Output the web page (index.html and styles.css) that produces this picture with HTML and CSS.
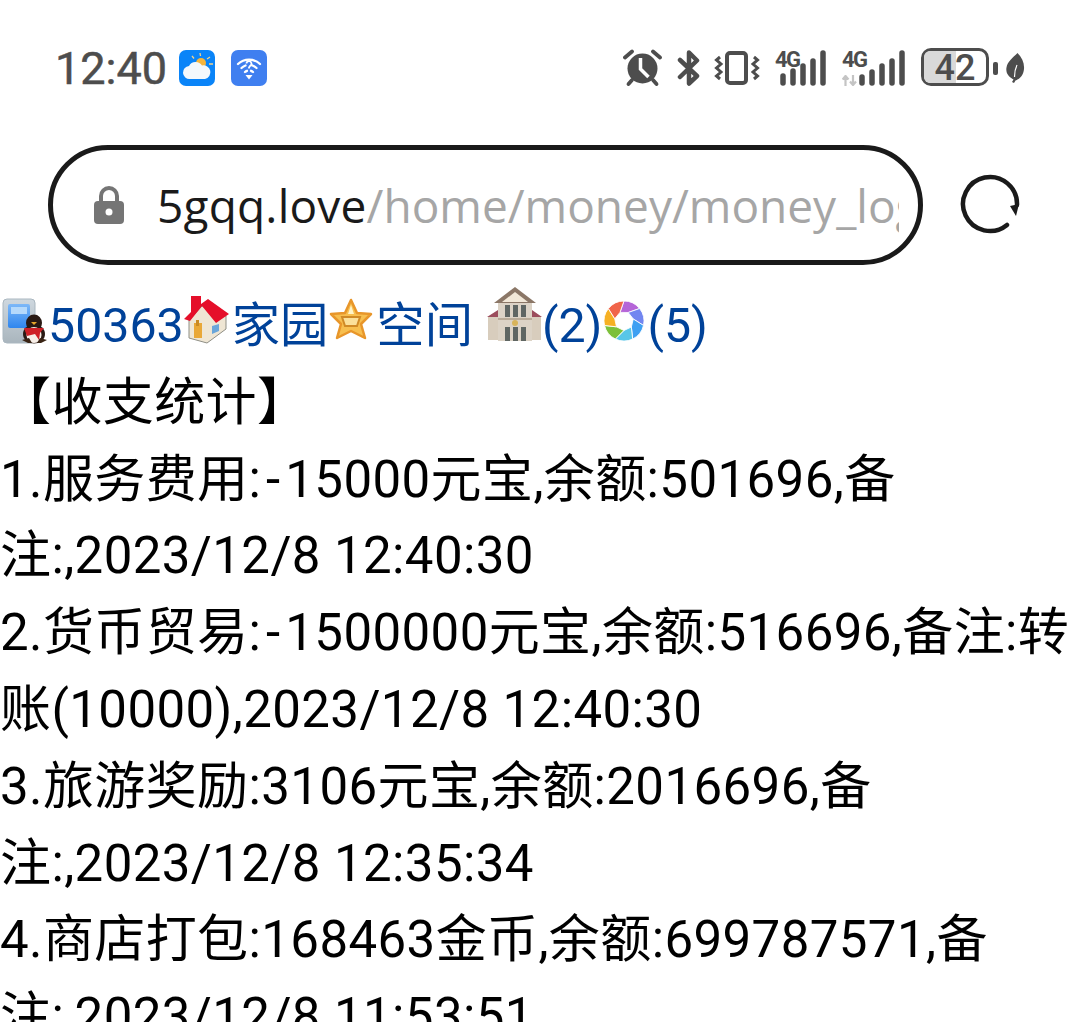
FILE: index.html
```html
<!DOCTYPE html>
<html lang="zh-CN">
<head>
  <meta charset="UTF-8" />
  <title>收支统计</title>
  <link rel="stylesheet" href="styles.css">
</head>
<body>
  <div class="status-bar">
    <div class="status-left">
      <span class="clock">12:40</span>
      <svg class="app-icon" width="36" height="36" viewBox="0 0 36 36">
        <rect width="36" height="36" rx="7" fill="#0a84f8"/>
        <circle cx="22" cy="13" r="5" fill="#f6b53c"/>
        <path d="M21 3l.5 3M13 6l2 2.500M31 7l-3 2M34 14h-4" stroke="#f3d28a" stroke-width="1.300" fill="none"/>
        <path d="M11 29a6.500 6.500 0 0 1-1-13 7.500 7.500 0 0 1 13-.5 6.800 6.800 0 0 1 3 13.500z" fill="#f4f8fc"/>
      </svg>
      <svg class="app-icon wifi-app" width="36" height="36" viewBox="0 0 36 36">
        <rect width="36" height="36" rx="7" fill="#3f7ff0"/>
        <path d="M7 14a16 16 0 0 1 22 0M10.500 18a11.500 11.500 0 0 1 4-2.500M25.500 18a11.500 11.500 0 0 0-4-2.500M14 22a6 6 0 0 1 2-1.200M22 22a6 6 0 0 0-2-1.200" stroke="#fff" stroke-width="2.300" fill="none" stroke-linecap="round"/>
        <path d="M15.500 13.500a2.500 2.500 0 1 1 3.500 2.500l-1 1.500v1" stroke="#fff" stroke-width="1.800" fill="none"/>
        <path d="M14.500 25h7l-3.500 4.500z" fill="#fff"/>
      </svg>
    </div>
    <div class="status-right">
      <svg class="s-alarm" width="40" height="38" viewBox="0 0 40 38">
        <circle cx="19.500" cy="19.500" r="15" fill="#4d4d4d"/>
        <path d="M17.500 9v11l8 8" stroke="#fff" stroke-width="3.500" fill="none"/>
        <path d="M2 8.500L9 2.500M37 8.500L30 2.500" stroke="#4d4d4d" stroke-width="3.800" stroke-linecap="round"/>
        <path d="M9 31l-3.500 4M30 31l3.500 4" stroke="#4d4d4d" stroke-width="3.800" stroke-linecap="round"/>
      </svg>
      <svg class="s-bt" width="24" height="36" viewBox="0 0 24 36">
        <path d="M3 10l17 16-8 7.500V2.500l8 8L3 27" stroke="#4d4d4d" stroke-width="4.500" fill="none" stroke-linejoin="round" stroke-linecap="round"/>
      </svg>
      <svg class="s-vib" width="46" height="36" viewBox="0 0 46 36">
        <rect x="13" y="3" width="19" height="30" rx="3" stroke="#4d4d4d" stroke-width="4" fill="none"/>
        <path d="M6 7L2.500 10 7 14 2.500 18 7 22 2.500 26 6 29M40 7l3.500 3L39 14l4.500 4L39 22l4.500 4L40 29" stroke="#4d4d4d" stroke-width="3" fill="none"/>
      </svg>
      <span class="sim">
        <span class="net">4G</span>
        <svg width="52" height="36" viewBox="0 0 52 36">
          <path d="M8 26v7M18 21v12M28 16v17M38 11v22M48 3v30" stroke="#4d4d4d" stroke-width="5.500" stroke-linecap="round"/>
        </svg>
      </span>
      <span class="sim sim-two">
        <span class="net">4G</span>
        <svg class="arrows" width="15" height="11" viewBox="0 0 15 11"><path d="M3.500 11V3M.5 4.500L3.500 1l3 3.500M11 0v8M8 6.500l3 3.500 3-3.500" stroke="#c4c4c4" stroke-width="2.200" fill="none"/></svg>
        <svg width="64" height="36" viewBox="0 0 64 36">
          <path d="M20 27v6M30 22v11M40 16v17M50 11v22M60 3v30" stroke="#4d4d4d" stroke-width="5.500" stroke-linecap="round"/>
        </svg>
      </span>
      <span class="battery"><span class="battery-level"></span><span class="battery-num">42</span></span>
      <span class="battery-tip"></span>
      <svg class="s-leaf" width="20" height="32" viewBox="0 0 20 32">
        <path d="M12.500 1c4.500 4.500 7 10 6.500 16-.5 6-4 10-8.500 11.500L9 31 7 30l1.500-2.500C3.500 25 .5 21 1.500 15.500 2.500 9.500 8 5.500 12.500 1z" fill="#4d4d4d"/>
        <path d="M9.500 25c0-5 1-9 2.500-12" stroke="#fff" stroke-width="1.200" fill="none"/>
      </svg>
    </div>
  </div>

  <div class="url-row">
    <div class="url-bar">
      <svg class="lock" width="32" height="40" viewBox="0 0 32 40">
        <path d="M8 18v-7a8 8 0 0 1 16 0v7" stroke="#757575" stroke-width="4" fill="none"/>
        <rect x="1" y="16" width="30" height="23" rx="4" fill="#757575"/>
        <circle cx="16" cy="27" r="3.500" fill="#fff"/>
      </svg>
      <div class="url-text"><span class="host">5gqq.love</span>/home/money/money_log</div>
    </div>
    <svg class="reload" width="62" height="62" viewBox="0 0 62 62">
      <path d="M48 51A27 27 0 1 1 58 31" stroke="#1a1a1a" stroke-width="4.500" fill="none" stroke-linecap="round"/>
      <path d="M51 32l9-2-3 12z" fill="#1a1a1a"/>
    </svg>
  </div>

  <main class="content">
    <div class="nav-line">
      <svg class="fav" width="48" height="48" viewBox="0 0 48 48">
        <defs>
          <linearGradient id="screen" x1="0" y1="0" x2="0" y2="1"><stop offset="0" stop-color="#7db8f8"/><stop offset="1" stop-color="#2f86ee"/></linearGradient>
          <linearGradient id="pc" x1="0" y1="0" x2="0" y2="1"><stop offset="0" stop-color="#cfd8df"/><stop offset="1" stop-color="#a9b5bd"/></linearGradient>
        </defs>
        <rect x="3" y="3" width="32" height="44" rx="4" fill="url(#pc)" stroke="#aab7c0"/>
        <rect x="8" y="8" width="22" height="24" rx="2" fill="url(#screen)"/>
        <rect x="11" y="11" width="16" height="7" fill="#b5d9fb"/>
        <ellipse cx="34" cy="27" rx="8" ry="8.500" fill="#2a1a14"/>
        <ellipse cx="34" cy="38" rx="11" ry="9.500" fill="#2a1a14"/>
        <ellipse cx="34" cy="39" rx="7.500" ry="8" fill="#f8efe8"/>
        <path d="M24 32h20l-4 5-1 7-4-6-8 2z" fill="#cf2026"/>
        <path d="M31 26h6l-3 3z" fill="#e5a52a"/>
        <path d="M22 44l6 3h4l-3-5zM47 44l-6 3h-4l3-5z" fill="#3a2415"/>
      </svg><a href="#">50363</a><svg class="fav" width="48" height="48" viewBox="0 0 48 48">
        <path d="M5 24L18 10l24 10v13L23 47 5 42z" fill="#efe6d4" stroke="#8f8f86"/>
        <path d="M0 23L7 16V0h10v8l7-5 21 15-13 9L18 10 6 25z" fill="#e50f2a"/>
        <rect x="10" y="27" width="8" height="15" fill="#e9a838"/>
        <rect x="12" y="24" width="3" height="6" fill="#c98a24"/>
        <path d="M28 30l7-2v7l-7 3z" fill="#6aa6da"/>
      </svg><a href="#">家园</a><svg class="fav" width="48" height="48" viewBox="0 0 48 48">
        <path d="M23 4l6 13 14 1-10 10 4 14-14-7-14 7 4-14L3 18l14-1z" fill="#f7bf4f" stroke="#e8962a" stroke-width="2.500" stroke-linejoin="round"/>
        <path d="M23 9l3 9h-6z" fill="#fff4c8"/>
        <path d="M14 21h18l-3 9H17z" fill="#fbe09a" stroke="#d08a26" stroke-width="2"/>
      </svg><a href="#">空间</a> <svg class="fav fav-big" width="55" height="55" viewBox="0 0 55 55">
        <path d="M28 0L7 16h42z" fill="#8b7767"/>
        <path d="M28 5L15 15h26z" fill="#f2e8d8"/>
        <rect x="11" y="16" width="34" height="38" fill="#dcd3c6"/>
        <path d="M0 30l11-7v7zM55 30l-10-7v7z" fill="#9c4d5c"/>
        <rect x="1" y="30" width="10" height="23" fill="#d8cdbd"/>
        <rect x="45" y="30" width="9" height="23" fill="#d8cdbd"/>
        <path d="M18 18h5v12h-5zM26 18h5v12h-5zM34 18h5v12h-5zM18 40h5v14h-5zM26 40h5v14h-5zM34 40h5v14h-5z" fill="#5f6663"/>
        <rect x="11" y="31" width="34" height="2" fill="#b9ab98"/>
        <circle cx="28" cy="36" r="3" fill="#d8b45a"/>
      </svg><a href="#">(2)</a><svg class="fav aperture" width="40" height="40" viewBox="0 0 40 40">
        <g stroke="#fff" stroke-width="0.800">
          <path d="M20 0A20 20 0 0 1 35.600 7.500L24.200 11.500 16 11.400z" fill="#b565d8"/>
          <path transform="rotate(51.430 20 20)" d="M20 0A20 20 0 0 1 35.600 7.500L24.200 11.500 16 11.400z" fill="#7286f0"/>
          <path transform="rotate(102.860 20 20)" d="M20 0A20 20 0 0 1 35.600 7.500L24.200 11.500 16 11.400z" fill="#3ea0f2"/>
          <path transform="rotate(154.290 20 20)" d="M20 0A20 20 0 0 1 35.600 7.500L24.200 11.500 16 11.400z" fill="#58c6e8"/>
          <path transform="rotate(205.710 20 20)" d="M20 0A20 20 0 0 1 35.600 7.500L24.200 11.500 16 11.400z" fill="#7cc03a"/>
          <path transform="rotate(257.140 20 20)" d="M20 0A20 20 0 0 1 35.600 7.500L24.200 11.500 16 11.400z" fill="#f6b023"/>
          <path transform="rotate(308.570 20 20)" d="M20 0A20 20 0 0 1 35.600 7.500L24.200 11.500 16 11.400z" fill="#f0644a"/>
        </g>
      </svg><a href="#">(5)</a>
    </div>
    <div>【收支统计】</div>
    <div>1.服务费用:<span class="minus">-</span>15000元宝,余额:501696,备注:,2023/12/8 12:40:30</div>
    <div>2.货币贸易:<span class="minus">-</span>1500000元宝,余额:516696,备注:转账(10000),2023/12/8 12:40:30</div>
    <div>3.旅游奖励:3106元宝,余额:2016696,备注:,2023/12/8 12:35:34</div>
    <div>4.商店打包:168463金币,余额:699787571,备注:,2023/12/8 11:53:51</div>
  </main>
</body>
</html>
```

FILE: styles.css
```css
html, body {
  margin: 0;
  padding: 0;
  height: 1022px;
  overflow: hidden;
  background-color: #fff;
}
body {
  font-family: Roboto, "Noto Sans CJK SC", sans-serif;
  color: #000;
}
.status-bar {
  display: flex;
  justify-content: space-between;
  align-items: center;
  height: 36px;
  padding: 50px 55px 0 55px;
  color: #4d4d4d;
}
.status-left,
.status-right {
  display: flex;
  align-items: center;
}
.clock {
  font-size: 45px;
  -webkit-text-stroke: 0.5px #4d4d4d;
  margin-right: 12px;
}
.wifi-app {
  margin-left: 16px;
}
.s-alarm {
  margin-right: 14px;
}
.s-bt {
  margin-right: 13px;
}
.s-vib {
  margin-right: 15px;
}
.sim {
  position: relative;
  display: block;
  width: 52px;
  height: 36px;
  margin-right: 15px;
}
.sim-two {
  width: 64px;
}
.sim svg {
  display: block;
}
.net {
  position: absolute;
  left: 0;
  top: -2px;
  font-size: 22px;
  font-weight: 700;
  line-height: 24px;
  letter-spacing: -1.5px;
}
.sim .arrows {
  position: absolute;
  left: 0;
  top: 25px;
}
.battery {
  position: relative;
  display: block;
  box-sizing: border-box;
  width: 68px;
  height: 38px;
  margin-bottom: 3px;
  border: 3.5px solid #4d4d4d;
  border-radius: 10px;
}
.battery-level {
  display: block;
  width: 52%;
  height: 100%;
  background-color: #d9d9d9;
  border-radius: 6px 0 0 6px;
}
.battery-num {
  position: absolute;
  left: 0;
  right: 0;
  top: -2px;
  text-align: center;
  font-size: 36px;
  font-weight: 500;
  line-height: 38px;
}
.battery-tip {
  display: block;
  width: 5px;
  height: 13px;
  margin: 0 7px 0 4px;
  background-color: #4d4d4d;
  border-radius: 2px;
}
.url-row {
  display: flex;
  align-items: center;
  padding: 59px 0 0 48px;
}
.url-bar {
  display: flex;
  align-items: center;
  box-sizing: border-box;
  width: 875px;
  height: 120px;
  padding: 0 19px 0 40px;
  border: 5px solid #1a1a1a;
  border-radius: 60px;
}
.lock {
  flex: none;
  margin-right: 32px;
}
.url-text {
  flex: 1;
  overflow: hidden;
  white-space: nowrap;
  font-family: "Open Sans", sans-serif;
  font-size: 46px;
  color: #a6a6a6;
}
.host {
  color: #1a1a1a;
  letter-spacing: 0.2px;
}
.reload {
  margin-left: 36px;
}
.content {
  margin-top: 22px;
  font-size: 51px;
  letter-spacing: 0.4px;
  line-height: 76.8px;
}
.content a {
  color: #004299;
  text-decoration: none;
}
.nav-line {
  font-size: 48.3px;
  letter-spacing: 0;
}
.fav {
  vertical-align: -2px;
  overflow: visible;
}
.fav-big {
  margin-left: 2px;
  vertical-align: 0;
}
.aperture {
  margin: 0 3px 0 2px;
  vertical-align: 1px;
}
.minus {
  display: inline-block;
  width: 24px;
  text-align: center;
}
```
